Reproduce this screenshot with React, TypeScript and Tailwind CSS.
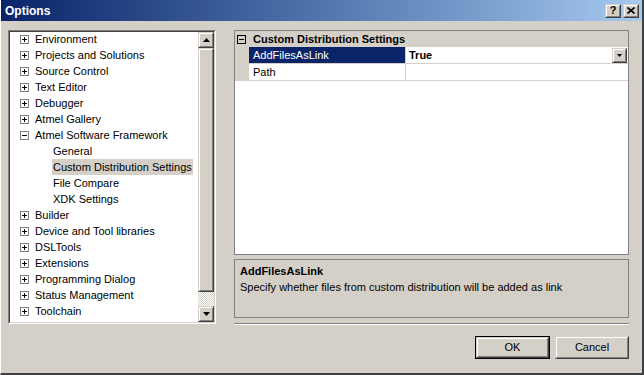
import React from "react"

const font = "font-['Liberation_Sans',Arial,sans-serif]"

type Node = { label: string; kind: "plus" | "minus" | "leaf"; selected?: boolean }

const tree: Node[] = [
  { label: "Environment", kind: "plus" },
  { label: "Projects and Solutions", kind: "plus" },
  { label: "Source Control", kind: "plus" },
  { label: "Text Editor", kind: "plus" },
  { label: "Debugger", kind: "plus" },
  { label: "Atmel Gallery", kind: "plus" },
  { label: "Atmel Software Framework", kind: "minus" },
  { label: "General", kind: "leaf" },
  { label: "Custom Distribution Settings", kind: "leaf", selected: true },
  { label: "File Compare", kind: "leaf" },
  { label: "XDK Settings", kind: "leaf" },
  { label: "Builder", kind: "plus" },
  { label: "Device and Tool libraries", kind: "plus" },
  { label: "DSLTools", kind: "plus" },
  { label: "Extensions", kind: "plus" },
  { label: "Programming Dialog", kind: "plus" },
  { label: "Status Management", kind: "plus" },
  { label: "Toolchain", kind: "plus" },
]

const ExpandBox = ({ open }: { open: boolean }) => (
  <svg width="9" height="9" viewBox="0 0 9 9" className="shrink-0">
    <rect x="0.5" y="0.5" width="8" height="8" fill="#fff" stroke="#808080" />
    <line x1="2" y1="4.5" x2="7" y2="4.5" stroke="#000" />
    {!open && <line x1="4.5" y1="2" x2="4.5" y2="7" stroke="#000" />}
  </svg>
)

const Raised = ({ className, children }: { className: string; children?: React.ReactNode }) => (
  <div className={`border border-t-[#d4d0c8] border-l-[#d4d0c8] border-r-[#404040] border-b-[#404040] ${className}`}>
    <div className="w-full h-full border border-t-white border-l-white border-r-[#808080] border-b-[#808080] bg-[#d4d0c8] flex items-center justify-center">
      {children}
    </div>
  </div>
)

const Arrow = ({ down }: { down?: boolean }) => (
  <svg width="7" height="4" viewBox="0 0 7 4">
    {down ? <polygon points="0,0 7,0 3.5,4" fill="#000" /> : <polygon points="0,4 7,4 3.5,0" fill="#000" />}
  </svg>
)

const TreeRow = ({ node }: { node: Node }) => {
  if (node.kind === "leaf") {
    return (
      <div className="h-[16px] flex items-center pl-[42px]">
        <span className={`px-[1px] leading-[16px] whitespace-nowrap ${node.selected ? "bg-[#d4d0c8]" : ""}`}>{node.label}</span>
      </div>
    )
  }
  return (
    <div className="h-[16px] flex items-center pl-[10px] gap-[6px]">
      <ExpandBox open={node.kind === "minus"} />
      <span className="leading-[16px] whitespace-nowrap">{node.label}</span>
    </div>
  )
}

export default function App() {
  return (
    <div className={`w-[644px] h-[375px] bg-[#d4d0c8] flex flex-col text-[11px] text-black ${font} border-r-[2px] border-r-[#404040] border-b-[2px] border-b-[#404040] border-l border-l-white overflow-hidden`}>
      <div className="h-[21px] shrink-0 bg-linear-to-r from-[#0a246a] to-[#a6caf0] flex items-center pl-[4px] pr-[3px]">
        <span className="text-white font-bold text-[12px] flex-1">Options</span>
        <Raised className="w-[16px] h-[14px]">
          <span className="font-bold text-[11px] leading-none">?</span>
        </Raised>
        <Raised className="w-[16px] h-[14px] ml-[2px]">
          <svg width="8" height="7" viewBox="0 0 8 7">
            <path d="M0.5 0.5 L7.5 6.5 M7.5 0.5 L0.5 6.5" stroke="#000" strokeWidth="1.6" />
          </svg>
        </Raised>
      </div>

      <div className="flex flex-1">
        <div className="ml-[7px] mt-[9px] w-[208px] h-[294px] border border-t-[#808080] border-l-[#808080] border-r-white border-b-white">
          <div className="w-full h-full border border-t-[#404040] border-l-[#404040] border-r-[#d4d0c8] border-b-[#d4d0c8] bg-white flex">
            <div className="flex-1 overflow-hidden -mt-[1px]">
              {tree.map((n) => (
                <TreeRow key={n.label} node={n} />
              ))}
            </div>
            <div className="w-[16px] flex flex-col">
              <Raised className="w-[16px] h-[16px] shrink-0">
                <Arrow />
              </Raised>
              <Raised className="w-[16px] flex-1" />
              <div className="h-[14px] shrink-0 bg-[repeating-conic-gradient(#fff_0_25%,#d4d0c8_0_50%)] bg-[length:2px_2px]" />
              <Raised className="w-[16px] h-[16px] shrink-0">
                <Arrow down />
              </Raised>
            </div>
          </div>
        </div>

        <div className="ml-[18px] mt-[9px] w-[395px] flex flex-col">
          <div className="h-[225px] border border-[#808080] bg-white flex flex-col">
            <div className="h-[16px] bg-[#d4d0c8] flex items-center pl-[2px] gap-[7px]">
              <svg width="9" height="9" viewBox="0 0 9 9" className="shrink-0">
                <rect x="0.5" y="0.5" width="8" height="8" fill="#d4d0c8" stroke="#000" />
                <line x1="2" y1="4.5" x2="7" y2="4.5" stroke="#000" />
              </svg>
              <span className="font-bold leading-[16px]">Custom Distribution Settings</span>
            </div>
            <div className="flex h-[17px] border-b border-[#d4d0c8]">
              <div className="w-[14px] bg-[#d4d0c8]" />
              <div className="w-[157px] bg-[#0a246a] text-white pl-[4px] leading-[16px] border-r border-[#d4d0c8]">AddFilesAsLink</div>
              <div className="flex-1 flex items-center pl-[3px] pr-[1px]">
                <span className="font-bold flex-1 leading-[16px]">True</span>
                <Raised className="w-[15px] h-[15px]">
                  <svg width="5" height="3" viewBox="0 0 5 3">
                    <polygon points="0,0 5,0 2.5,3" fill="#000" />
                  </svg>
                </Raised>
              </div>
            </div>
            <div className="flex h-[17px] border-b border-[#d4d0c8]">
              <div className="w-[14px] bg-[#d4d0c8]" />
              <div className="w-[157px] pl-[4px] leading-[16px] border-r border-[#d4d0c8]">Path</div>
              <div className="flex-1" />
            </div>
          </div>

          <div className="mt-[4px] h-[59px] border border-[#808080] px-[5px] pt-[4px]">
            <div className="font-bold leading-[14px]">AddFilesAsLink</div>
            <div className="leading-[14px] mt-[2px]">Specify whether files from custom distribution will be added as link</div>
          </div>

          <div className="mt-[5px] border-t border-t-[#808080] border-b border-b-white" />

          <div className="mt-[11px] flex justify-end gap-[5px]">
            <div className="w-[75px] h-[23px] border border-black">
              <Raised className="w-full h-full">OK</Raised>
            </div>
            <Raised className="w-[74px] h-[23px]">Cancel</Raised>
          </div>
        </div>
      </div>
    </div>
  )
}
